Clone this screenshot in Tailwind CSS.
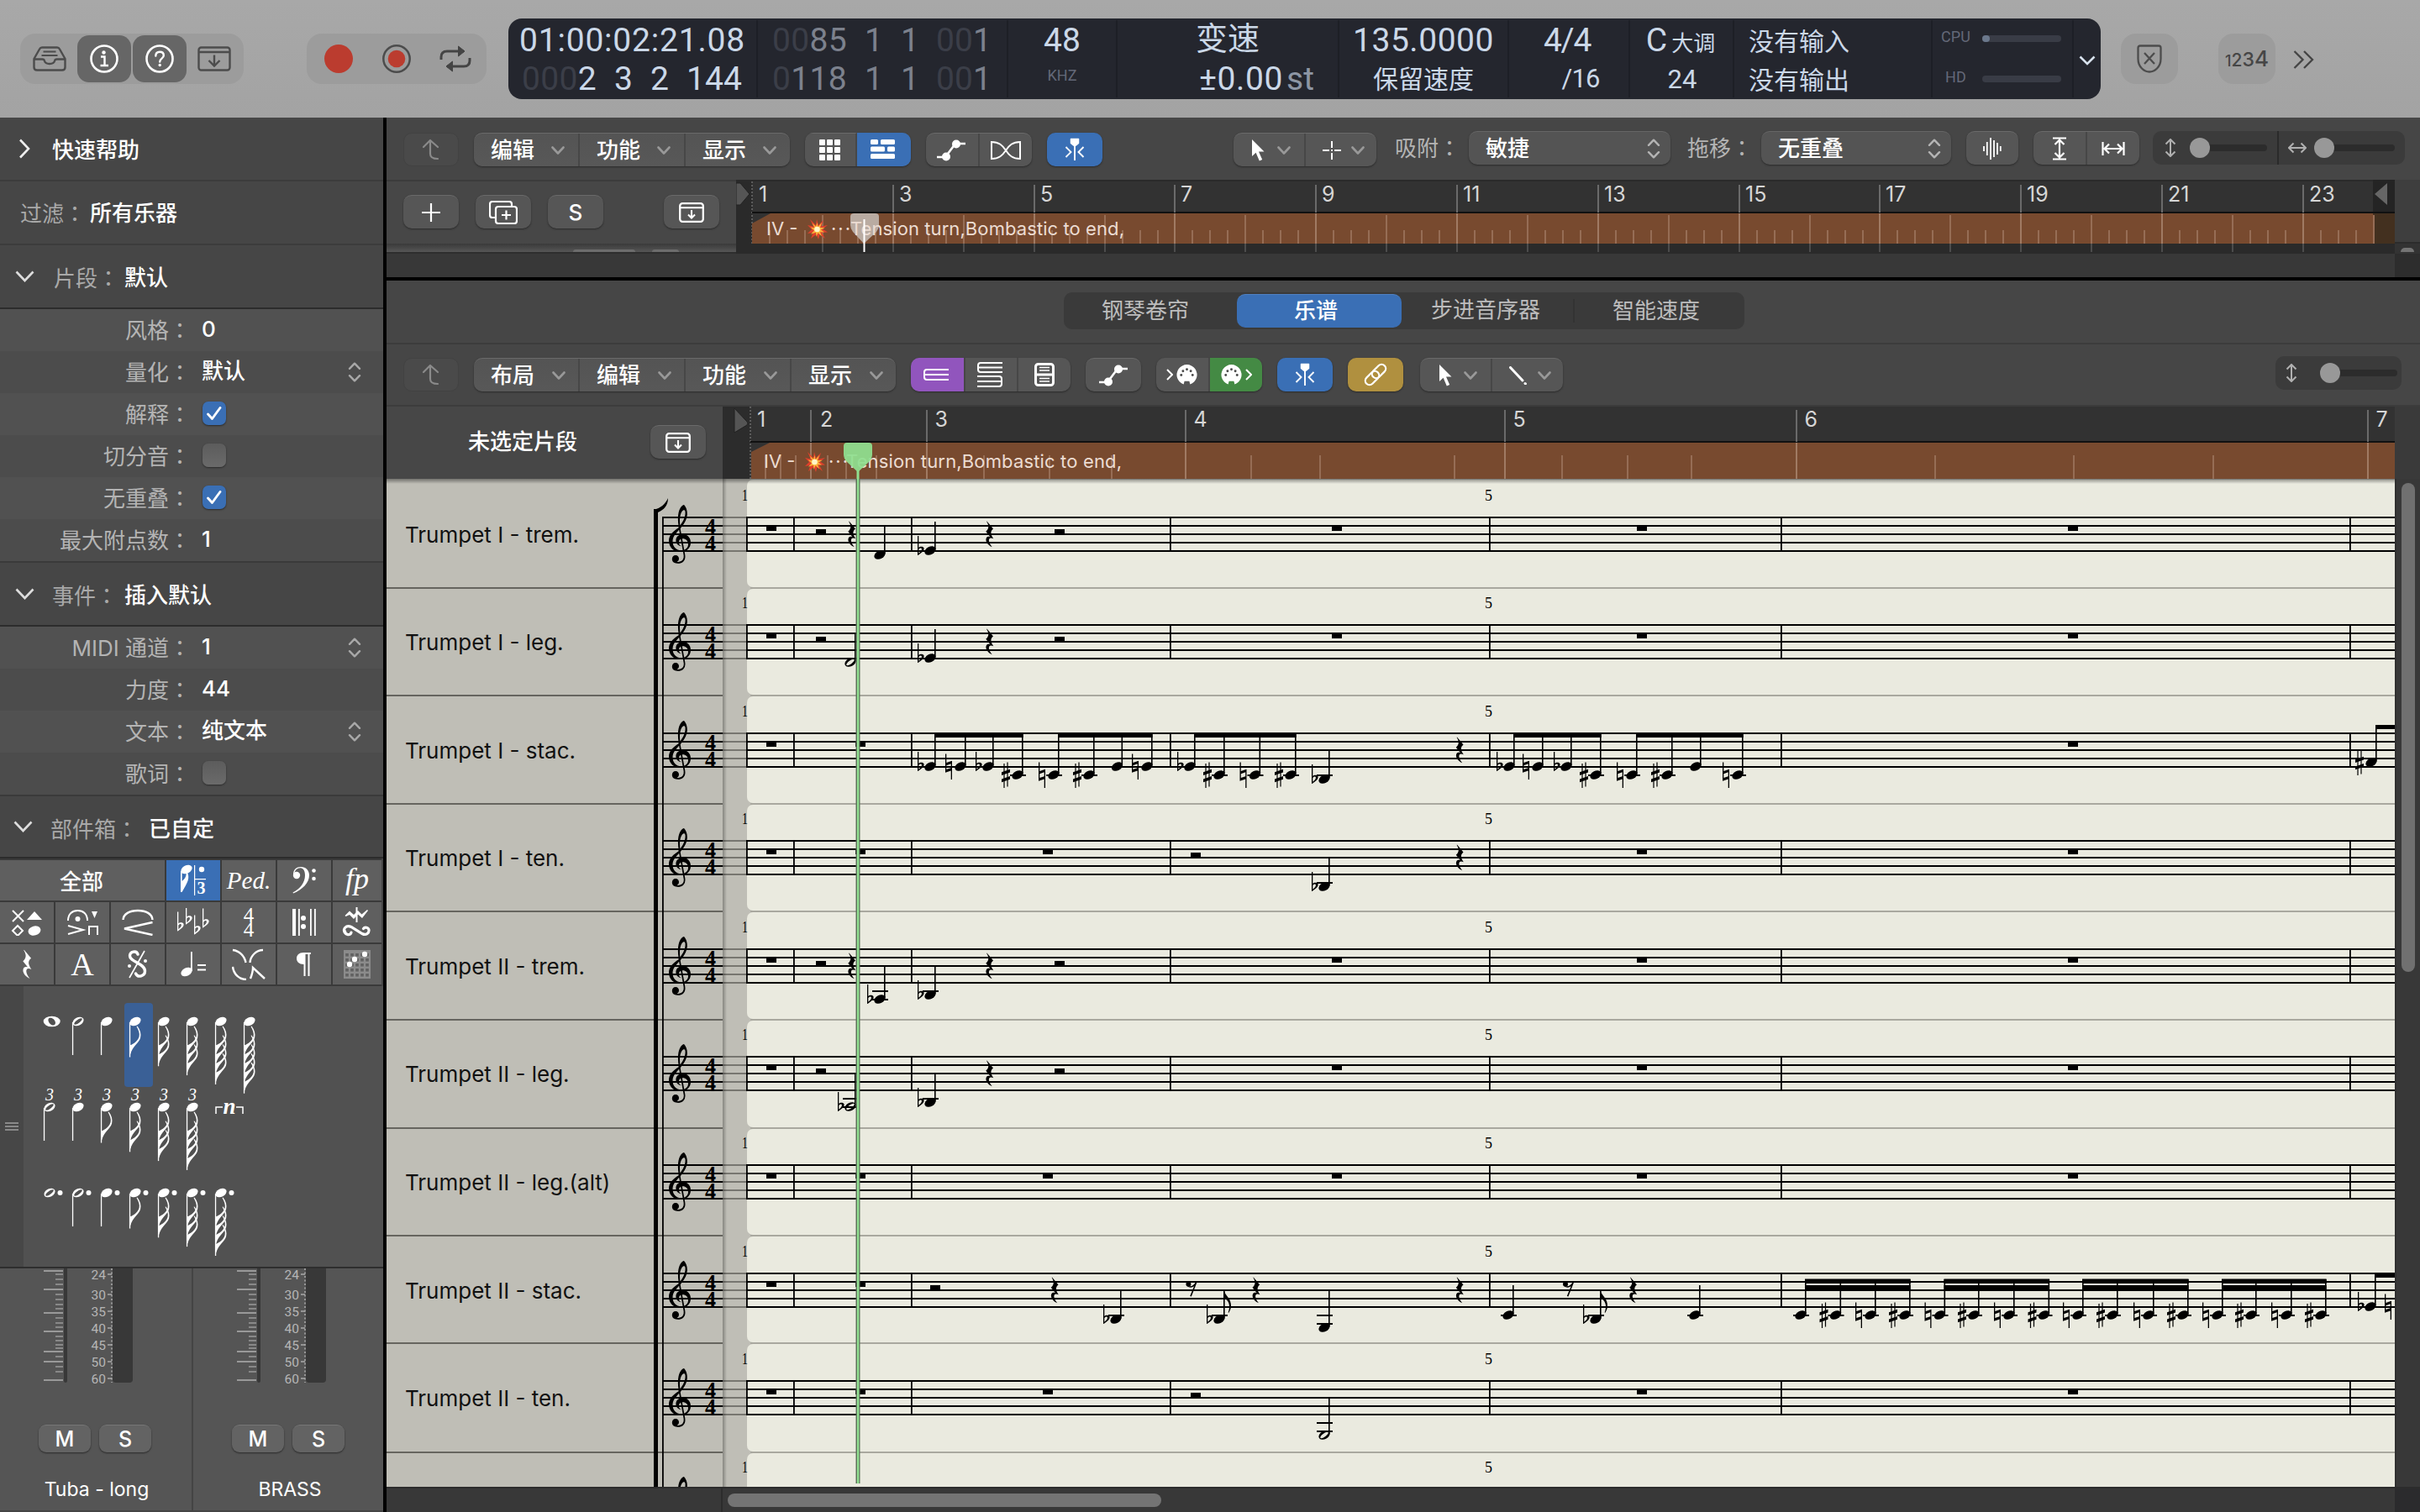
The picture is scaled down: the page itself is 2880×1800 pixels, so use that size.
<!DOCTYPE html>
<html lang="zh-CN">
<head>
<meta charset="utf-8">
<title>Logic Pro</title>
<script src="https://cdn.jsdelivr.net/npm/@tailwindcss/browser@4"></script>
</head>
<body class="w-[2880px] h-[1800px] overflow-hidden bg-black font-[Inter,'Noto_Sans_CJK_SC',sans-serif] text-[26px] leading-none text-white whitespace-nowrap flex flex-col">

<svg width="0" height="0" class="absolute">
  <defs>
    <symbol id="chev" viewBox="0 0 16 10"><path d="M1.500 1.500 8 8.500l6.500-7" fill="none" stroke="currentColor" stroke-width="2.600" stroke-linecap="round" stroke-linejoin="round"/></symbol>
    <symbol id="updown" viewBox="0 0 16 26"><path d="M1.500 8.500 8 1.800l6.500 6.700M1.500 17.500 8 24.200l6.500-6.700" fill="none" stroke="currentColor" stroke-width="2.600" stroke-linecap="round" stroke-linejoin="round"/></symbol>
    <symbol id="up" viewBox="0 0 24 26"><path d="M3 10 11 2l9 8M11 2v16c0 4 2 6 9 6" fill="none" stroke="currentColor" stroke-width="2.200" stroke-linecap="round" stroke-linejoin="round"/></symbol>
    <symbol id="boxdown" viewBox="0 0 30 24"><rect x="1.200" y="1.200" width="27.600" height="21.600" rx="3" fill="none" stroke="currentColor" stroke-width="2.300"/><path d="M1 6.200h28M15 9v9M11 14.400l4 4 4-4" fill="none" stroke="currentColor" stroke-width="2.100"/></symbol>
    <symbol id="curve" viewBox="0 0 36 26"><path d="M1 21h11M24 5h11M11 21 23 5" stroke="currentColor" stroke-width="2.600" fill="none"/><circle cx="12" cy="20.500" r="5" fill="currentColor"/><circle cx="24" cy="5.500" r="5" fill="currentColor"/></symbol>
    <symbol id="catch" viewBox="0 0 26 28"><path d="M8.500 1.500h9v5L14.500 9h-3L8.500 6.500z" fill="currentColor" stroke="currentColor" stroke-width="1.500" stroke-linejoin="round"/><path d="M13 8v19M2.500 11l6 6-6 6M23.500 11l-6 6 6 6" stroke="currentColor" stroke-width="1.900" fill="none"/></symbol>
    <symbol id="arrow" viewBox="0 0 16 26"><path d="M1 0v20l4.600-4.300L9.800 25.600l3.400-1.500L9 14.600h6.500z" fill="currentColor"/></symbol>
    <symbol id="midi" viewBox="0 0 28 28"><path d="M10 25.500A12.500 12.500 0 1 1 18 25.500L17 21.500h-6z" fill="currentColor"/><g fill="#4b4b4b"><circle cx="7" cy="14" r="1.500"/><circle cx="9.200" cy="9" r="1.500"/><circle cx="14" cy="7" r="1.500"/><circle cx="18.800" cy="9" r="1.500"/><circle cx="21" cy="14" r="1.500"/></g></symbol>
    <symbol id="boom" viewBox="0 0 24 24"><path d="M11 0l2 7 6-6-2.500 7.500L24 7l-6 4.500 6 4-7 .2L21 23l-6.500-5-1.500 6-2.500-6L4 23l2.500-7L0 17l5-5L0 7l7 1.500L3 0l7 7z" fill="#e0402c"/><path d="M11.500 4l1 5 4.500-5-2 6 5.500 0-4.500 2.500 4 3-5-.3 2 5-4.500-4-2 4.500-.5-5-6 2 4-4.200L3.500 9.500l5 .8L5.500 4.500l4.500 4z" fill="#fbb53a"/><circle cx="11.500" cy="12" r="3.300" fill="#fff6c8"/></symbol>

    <g id="n-black"><ellipse rx="7" ry="4.700" transform="rotate(-27)"/></g>
    <g id="n-half"><path fill-rule="evenodd" transform="rotate(-27)" d="M-7 0a7 4.700 0 1 0 14 0a7 4.700 0 1 0-14 0zM-5.700.8C-5.200-1.600 4.500-3.600 5.700-.8 5.200 1.600-4.500 3.600-5.700.8z"/></g>
    <g id="n-whole"><path fill-rule="evenodd" d="M-10 0a10 6.300 0 1 0 20 0a10 6.300 0 1 0-20 0zM-3.200-3.900C-.5-5.500 3.500-2.500 4.200.8 4.700 3.500 3 5 .8 4.500-3 3.700-6-2-3.200-3.900z"/></g>
    <g id="a-flat"><path d="M-4-17.500h1.300v14C-1.500-5 3-5.300 3.600-2.800 4.200.5-.5 3.200-3.600 5.500H-4zM-2.700-1.500v4.800C-.2 1.400 1.200-.5.900-2.200.6-3.600-1.700-3.200-2.700-1.500z" fill-rule="evenodd"/></g>
    <g id="a-nat"><path d="M-4-15h1.300v10.500L4-6.800V15.500H2.700V5L-4 7.300zM-2.700-1.200V3.600L2.700 1.800V-3.200z" fill-rule="evenodd"/></g>
    <g id="a-sharp"><path d="M-2-13.500v29M2-15v29" stroke="#000" stroke-width="1.200"/><path d="M-5-3.300 5-6.800v3.800L-5 .5zM-5 4.900 5 1.400v3.800L-5 8.700z"/></g>
    <g id="r-quarter"><path d="M-3-15.500 4.500-6.500C1 -3.500 1 -.5 4.800 5.300 1.200 3.500-.9 4.500-.6 8-.3 10.500 1.500 13 3.200 15.200-1.500 13.200-5.200 8.700-3.800 4.700-3.100 2.800-1 2.300 1 3.200L-4.200-3.300C-.6-6.500-.2-10-3.300-15z"/></g>
    <g id="r-eighth"><circle cx="-3.600" cy="-5.300" r="3"/><path d="M-5-3.600C-1.500-1.500 2.500-3 4.900-7.500L6.300-7-.2 9.500l-1.600-.5L3-2.700C.5-.8-3-.8-5-3z"/></g>
    <g id="flag"><path d="M0 0h.8C1.500 6 9.500 9.500 9 19c-.2 3-1.300 5.500-2.600 7.800l-.8-.4C8 21 8.200 13 .8 9.500H0z"/></g>
    <g id="flag-down"><path d="M0 0v-14C2-14.500 9.300-17.500 11.400-24.500 12.400-28.500 10.500-32.500 8.300-36.500l1-.4C12.800-32 14-27.500 12.900-23 11.200-16.800 4-14 .8-3z"/></g>
    <g id="clef"><path fill-rule="evenodd" d="M12 27C10.300 19 10.500 10 13 5 14.500 1.500 17 0 18 0c2.500 2.500 4.200 7 3.800 12-.6 6.500-4.300 11.500-8 16C9.500 33 4.500 37 4.500 43.500 4.500 50 9 54.200 14.500 54.200 19 54.200 23 51.700 23 47c0-4-3-6.700-6.500-6.700-3 0-4.600 2-4.600 4.600 0 2 1.200 3.500 2.900 4.400C11 48.600 8.400 46 8.400 42.500c0-4.500 3.600-7.400 8.100-7.400C22 35.100 26 39 26 45c0 6.500-5 11-12 11C6 56 0 51 0 42.500 0 36 5.500 31 12 27zM13.400 24.500C12.600 18 13 12 15.500 8c1.500-2.300 3.600-2.500 4 0 .6 6-2.600 12-6.100 16.500z"/><path d="M12.200 25l6.300 35c.8 5.500-2.500 9-8 9" fill="none" stroke="#000" stroke-width="1.700"/><path d="M18 64c-1.500 4-4.500 5.700-8 5.700-4 0-6.200-2.200-6.200-5.200C3.800 62 5.600 60 8 60c2.500 0 4 1.700 4 4 0 2-1 3.300-2.500 4 4 .5 7-1 8.500-4z"/></g>
  </defs>
</svg>

<!-- control bar -->
<header class="relative h-[140px] shrink-0 bg-linear-to-b from-[#a8a8a8] to-[#a3a3a3] flex items-start text-[#4c4c4c]">
  <div class="ml-6 mt-10 w-[266px] h-[60px] rounded-[18px] bg-[#9c9c9c] flex items-center px-[2px]">
    <div class="w-[66px] flex justify-center"><svg width="40" height="30" viewBox="0 0 40 30" fill="none" stroke="currentColor" stroke-width="2.400" stroke-linejoin="round"><path d="M1.500 15 8 3.500Q9 1.500 11 1.500h18q2 0 3 2L38.500 15v10q0 3.500-3.500 3.500H5Q1.500 28.500 1.500 25zM1.500 15.500h10q2 0 2.500 2 1 3.500 6 3.500t6-3.500q.5-2 2.500-2h10"/><path d="M12.500 6.500h15M10.500 11h19" stroke-width="2"/></svg></div>
    <div class="w-16 h-14 rounded-[14px] bg-[#666] text-white flex items-center justify-center"><svg width="36" height="36" viewBox="0 0 36 36"><circle cx="18" cy="18" r="15.500" fill="none" stroke="currentColor" stroke-width="2.600"/><circle cx="17.500" cy="10.500" r="2.200" fill="currentColor"/><path d="M14 15.500h4.500V26M13.500 26h9.500" stroke="currentColor" stroke-width="2.400" fill="none"/></svg></div>
    <div class="ml-[2px] w-16 h-14 rounded-[14px] bg-[#666] text-white flex items-center justify-center"><svg width="36" height="36" viewBox="0 0 36 36"><circle cx="18" cy="18" r="15.500" fill="none" stroke="currentColor" stroke-width="2.600"/><path d="M13.300 14.500c0-3 2-4.800 4.800-4.800s4.700 1.700 4.700 4.200c0 3.800-4.600 3.600-4.600 7.600" stroke="currentColor" stroke-width="2.400" fill="none" stroke-linecap="round"/><circle cx="18.200" cy="25.500" r="1.700" fill="currentColor"/></svg></div>
    <div class="w-[66px] flex justify-center"><svg width="40" height="30" viewBox="0 0 40 30" fill="none" stroke="currentColor" stroke-width="2.400"><rect x="1.500" y="1.500" width="37" height="27" rx="3"/><path d="M1.500 7h37M20 10.500v13M13.500 17l6.500 6.500 6.500-6.500"/></svg></div>
  </div>
  <div class="ml-[75px] mt-10 w-[214px] h-[60px] rounded-[18px] bg-[#9c9c9c] flex items-center pl-[21px]">
    <svg width="34" height="34"><circle cx="17" cy="17" r="17" fill="#bb3c2f"/></svg>
    <svg class="ml-[35px]" width="34" height="34"><circle cx="17" cy="17" r="15.700" fill="none" stroke="#4c4c4c" stroke-width="2.500"/><circle cx="17" cy="17" r="10.300" fill="#bb3c2f"/></svg>
    <svg class="ml-[34px]" width="38" height="32" viewBox="0 0 38 32" fill="none" stroke="#444" stroke-width="3"><path d="M2 17v-3q0-7 7-7h20M36 15v3q0 7-7 7H9"/><path d="M22.500 1 30 7l-7.500 6zM15.500 19 8 25l7.500 6z" fill="#444" stroke-width="1"/></svg>
  </div>

  <div class="ml-[26px] mt-[22px] w-[1895px] h-24 rounded-[16px] bg-[#24262e] text-[#cbd8e8] font-[Roboto,'Noto_Sans_CJK_SC',sans-serif] flex py-[2px] [&>div]:border-r-2 [&>div]:border-[#1d1f26]">
    <div class="w-[297px] pl-[13px] pt-[7px] text-[39px]">
      <div class="h-[46px] leading-[35px]"><span data-w="269">01:00:02:21.08</span></div>
      <div class="pl-[3px] flex gap-[21px] leading-[35px]"><span data-w="89"><span class="text-[#3b3e48]">000</span>2</span><span data-w="22">3</span><span data-w="22">2</span><span data-w="66">144</span></div>
    </div>
    <div class="w-[298px] pl-[17px] pt-[7px] text-[39px] text-[#7c818d]">
      <div class="h-[46px] flex gap-[21px] leading-[35px]"><span data-w="89"><span class="text-[#3b3e48]">00</span>85</span><span data-w="22">1</span><span data-w="21">1</span><span data-w="66"><span class="text-[#3b3e48]">00</span>1</span></div>
      <div class="flex gap-[21px] leading-[35px]"><span data-w="89"><span class="text-[#3b3e48]">0</span>118</span><span data-w="22">1</span><span data-w="21">1</span><span data-w="66"><span class="text-[#3b3e48]">00</span>1</span></div>
    </div>
    <div class="w-[130px] pt-[7px] text-center text-[39px] leading-[35px]">48<div class="mt-[14px] text-[18px] leading-[20px] text-[#636878]"><span data-w="35">KHZ</span></div></div>
    <div class="w-[264px] text-[39px]">
      <div class="pl-[93px] pt-[1px] h-[53px] text-[38px] leading-[42px]">变速</div>
      <div class="pl-[97px] leading-[35px] flex gap-[4px]"><span data-w="100">±0.00</span><span class="text-[#8d96a4]">st</span></div>
    </div>
    <div class="w-[202px] pt-[7px] text-center text-[39px] leading-[35px]"><span data-w="168">135.0000</span><div class="mt-[9px] text-[30px] leading-[40px]">保留速度</div></div>
    <div class="w-[144px] pt-[7px] pr-[4px] text-center text-[39px] leading-[35px]"><span data-w="56">4/4</span><div class="mt-[8px] pl-[32px] text-[31px] leading-[40px]"><span data-w="45">/16</span></div></div>
    <div class="w-[124px] text-center">
      <div class="pt-[7px] h-[50px] flex items-baseline justify-center gap-[5px] pr-[2px] text-[39px] leading-[35px]">C<span class="text-[26px]">大调</span></div>
      <div class="text-[31px] leading-[42px]"><span class="pl-[2px]">24</span></div>
    </div>
    <div class="w-[236px] pl-[17px] pt-[4px] text-[30px] leading-[44px]">没有输入<div class="mt-[2px]">没有输出</div></div>
    <div class="w-[168px] pt-[10px] text-[18px] text-[#636878]">
      <div class="pl-[10px] h-[20px] flex items-center"><span data-w="35">CPU</span><div class="ml-[14px] mt-[4px] w-[94px] h-2 rounded-full bg-[#393c46]"><div class="w-[9px] h-2 rounded-full bg-[#6b788c]"></div></div></div>
      <div class="mt-[28px] pl-[15px] h-[20px] flex items-center"><span data-w="25">HD</span><div class="ml-[19px] mt-[4px] w-[94px] h-2 rounded-full bg-[#393c46]"></div></div>
    </div>
    <span class="w-[32px] flex items-center justify-center"><svg class="mt-1" width="20" height="12" viewBox="0 0 20 12"><path d="M1.500 1.500 10 10l8.500-8.500" fill="none" stroke="#d8e2ee" stroke-width="2.600"/></svg></span>
  </div>
  <div class="ml-6 mt-10 w-[68px] h-[60px] rounded-[18px] bg-[#9c9c9c] flex items-center justify-center"><svg width="30" height="34" viewBox="0 0 30 34" fill="none" stroke="#4c4c4c" stroke-width="2.300"><path d="M1.500 4q0-2.500 2.500-2.500h22q2.500 0 2.500 2.500v13C28.500 27 21 32.500 15 32.500S1.500 27 1.500 17zM9 10l12 13M21 10 9 23"/></svg></div>
  <div class="ml-12 mt-10 w-[68px] h-[60px] rounded-[18px] bg-[#9c9c9c] flex items-baseline justify-center pt-[17px] font-medium text-[#464646]"><span class="text-[18px]">1</span><span class="text-[21px]">2</span><span class="text-[23px]">3</span><span class="text-[26px]">4</span></div>
  <svg class="ml-[21px] mt-[60px]" width="25" height="22" viewBox="0 0 25 22" fill="none" stroke="#444" stroke-width="2.300"><path d="M1.500 1 11.500 11l-10 10M13 1l10 10-10 10"/></svg>
</header>

<main class="flex-1 flex min-h-0">

<!-- inspector -->
<aside class="w-[456px] mr-[4px] shrink-0 bg-[#464646] flex flex-col">
  <div class="h-[76px] border-b-2 border-[#3c3c3c] flex items-center pl-[22px] font-medium"><svg width="14" height="24" viewBox="0 0 14 24"><path d="M2 1.500 12 12 2 22.500" fill="none" stroke="#eee" stroke-width="2.600"/></svg><span class="ml-[26px] mt-1">快速帮助</span></div>
  <div class="h-[76px] border-b-2 border-[#3c3c3c] flex items-center pl-6"><span class="mt-[2px] text-[#a9a9a9]">过滤<span lang="zh-TW" class="font-['Noto_Sans_CJK_TC']">：</span></span><span class="mt-[2px] ml-[5px] font-medium">所有乐器</span></div>
  <div class="h-[76px] border-b-2 border-[#2c2c2c] flex items-center pl-[18px]"><svg width="23" height="14" viewBox="0 0 23 14"><path d="M1.500 1.500 11.500 12l10-10.500" fill="none" stroke="#ddd" stroke-width="2.600"/></svg><span class="mt-1 ml-[23px] text-[#a9a9a9]">片段<span lang="zh-TW" class="font-['Noto_Sans_CJK_TC']">：</span></span><span class="mt-1 ml-[6px] font-medium">默认</span></div>
  <div id="p1" class="h-[302px] border-b-2 border-[#3a3a3a]"></div>
  <div class="h-[76px] border-b-2 border-[#2c2c2c] flex items-center pl-[18px]"><svg width="23" height="14" viewBox="0 0 23 14"><path d="M1.500 1.500 11.500 12l10-10.500" fill="none" stroke="#ddd" stroke-width="2.600"/></svg><span class="mt-1 ml-[21px] text-[#a9a9a9]">事件<span lang="zh-TW" class="font-['Noto_Sans_CJK_TC']">：</span></span><span class="mt-1 ml-[8px] font-medium">插入默认</span></div>
  <div id="p2" class="h-[202px] border-b-2 border-[#3a3a3a]"></div>
  <div class="h-[74px] border-b-2 border-[#2c2c2c] flex items-center pl-[16px]"><svg width="23" height="14" viewBox="0 0 23 14"><path d="M1.500 1.500 11.500 12l10-10.500" fill="none" stroke="#ddd" stroke-width="2.600"/></svg><span class="mt-[6px] ml-[21px] text-[#a9a9a9]">部件箱<span lang="zh-TW" class="font-['Noto_Sans_CJK_TC']">：</span></span><span class="mt-[6px] ml-[13px] font-medium">已自定</span></div>

  <!-- part box selector -->
  <div class="h-[152px] bg-[#3a3a3a] pt-[2px] grid grid-cols-[64px_64px_64px_64px_64px_64px_58px] grid-rows-[48px_48px_48px] gap-[2px] [&>div]:bg-[#5f5f5f] [&>div]:flex [&>div]:items-center [&>div]:justify-center font-['Liberation_Serif'] mr-[2px]">
    <div class="col-span-3 font-['Noto_Sans_CJK_SC'] font-medium pr-[2px]"><span>全部</span></div>
    <div class="bg-[#3a6fb5]!"><svg width="32" height="38" viewBox="0 0 32 38" fill="#fff"><use href="#n-black" x="8" y="6"/><path d="M1 8h1.600v25H1zM2.600 20c4-3 6-7 4.500-12h1C13 16 9 22 2.600 33zM17 1h1.200v36H17zM17 17h14v1.200H17z"/><circle cx="26" cy="6" r="3.200"/><text x="20.500" y="35" font-size="20" font-weight="bold" font-family="Liberation Serif">3</text></svg></div>
    <div><span class="italic text-[29px] font-medium">Ped.</span></div>
    <div><svg width="30" height="34" viewBox="0 0 30 34" fill="#fff"><circle cx="6" cy="11" r="4.200"/><path d="M2 10C2 4 6 1 11 1c6 0 10 4 10 10 0 9-8 17-19 21.500l-.5-1C10 27 16 20 16 11 16 6 14 2.200 10.500 2.200 6.500 2.200 3.500 5 3.200 10z"/><circle cx="26.500" cy="5.500" r="2.300"/><circle cx="26.500" cy="15" r="2.300"/></svg></div>
    <div><span class="italic text-[36px] pb-[4px]">fp</span></div>

    <div><svg width="38" height="32" viewBox="0 0 38 32" fill="none" stroke="#fff" stroke-width="2"><path d="M2 2l13 13M15 2 2 15M8 20l6 6-6 6-6-6z"/><path d="M28 3l9 10H19z" fill="#fff" stroke="none"/><ellipse cx="28" cy="26" rx="7.500" ry="5.500" fill="#fff" stroke="none" transform="rotate(-15 28 26)"/></svg></div>
    <div><svg width="38" height="32" viewBox="0 0 38 32" fill="none" stroke="#fff" stroke-width="2"><path d="M2 14C2 6 7 2 13.500 2S25 6 25 14M2 20l18 5-18 5M27 31V21h10v10"/><circle cx="13.500" cy="12" r="3" fill="#fff" stroke="none"/><path d="M30 3h7l-3.500 8z" fill="#fff" stroke="none"/></svg></div>
    <div><svg width="38" height="32" viewBox="0 0 38 32" fill="none" stroke="#fff" stroke-width="2.400"><path d="M1.500 13C2 6 9 2 19 2s17 4 17.500 11M36.500 16 3 23.500 36.500 31"/></svg></div>
    <div><svg width="40" height="34" viewBox="0 0 40 34" fill="#fff"><use href="#a-flat" x="5" y="22"/><use href="#a-flat" x="15" y="14"/><use href="#a-flat" x="25" y="26"/><use href="#a-flat" x="35" y="18"/></svg></div>
    <div><span class="flex flex-col text-[25px] font-medium leading-[17px]"><span>4</span><span>4</span></span></div>
    <div><svg width="30" height="32" viewBox="0 0 30 32" fill="#fff"><path d="M1 0h4v32H1zM8 0h1.800v32H8zM22 0h1.800v32H22zM27 0h1.800v32H27z"/><circle cx="14" cy="11" r="3"/><circle cx="14" cy="21" r="3"/></svg></div>
    <div><svg width="36" height="36" viewBox="0 0 36 36" fill="#fff"><path d="M3.500 10 9 4.500 14 9l5-5 4.500 4.500L30 3l1 1-7 9-5-4.500L14 14 9 9l-4.500 2z"/><path d="M16.500 0h2v18h-2z"/><path d="M4 31c-4-5 1-10.500 7-7.500l13 8c4.500 2.500 8.500-.5 8-4.500-.5-3-5-4-6.500-1.500M3.500 28.500c0 5 7 5.500 7.500 1.500" fill="none" stroke="#fff" stroke-width="3.200" stroke-linecap="round"/></svg></div>

    <div><svg width="24" height="38" viewBox="-8 -17 16 34" fill="#fff"><use href="#r-quarter"/></svg></div>
    <div><span class="text-[38px]">A</span></div>
    <div><svg width="26" height="34" viewBox="0 0 26 34" fill="none" stroke="#fff"><path d="M13 5C11.500 0 3.500 1.500 3.500 7c0 7 18 9 18 18 0 6-8.500 8.500-11 3" stroke-width="3.400" stroke-linecap="round"/><path d="M21 1 3 33" stroke-width="1.600"/><circle cx="3" cy="19" r="2" fill="#fff" stroke="none"/><circle cx="22" cy="13" r="2" fill="#fff" stroke="none"/></svg></div>
    <div><svg width="32" height="30" viewBox="0 0 32 30" fill="#fff"><use href="#n-black" x="8" y="24"/><path d="M13 0h1.800v23H13zM21 15h10v2H21zM21 20.500h10v2H21z"/></svg></div>
    <div><svg width="40" height="38" viewBox="0 0 40 38" fill="none" stroke="#fff" stroke-width="2.400"><path d="M1 2c8 1 14 7 15.500 15M37 2c-8 0-15 7-15.500 15M1 22c1 9 8 15 16 15M22 36c2-5 3-9 3-13l14 13"/></svg></div>
    <div><svg width="20" height="28" viewBox="0 0 20 28" fill="#fff"><path d="M9 0h9v2h-1.500v26h-2V2H11.500v26h-2V14C4 14 1 11 1 7s3-7 8-7z"/></svg></div>
    <div><svg width="32" height="34" viewBox="0 0 32 34"><path d="M0 0h32v34H0z" fill="#8b8b8b"/><path d="M4 4v28M10 4v28M16 4v28M22 4v28M28 4v28" stroke="#616161" stroke-width="3.600" stroke-dasharray="3.600 2.400" fill="none"/><g fill="#fff"><circle cx="25" cy="5" r="3.200"/><circle cx="13" cy="11" r="3.200"/><circle cx="7" cy="17" r="3.200"/></g></svg></div>
  </div>
  <div class="h-[336px] border-b-2 border-[#2e2e2e] flex">
    <div class="w-7 bg-[#474747] flex items-center justify-center"><svg width="16" height="12"><path d="M0 2h16M0 6h16M0 10h16" stroke="#a0a0a0" stroke-width="1.300"/></svg></div>
    <svg id="parts" class="flex-1 bg-[#515151]" viewBox="28 1174 428 334" fill="#fff"></svg>
  </div>
  <div id="mixer" class="flex-1 bg-[#555] flex border-b-2 border-[#444]"></div>
</aside>

<section class="flex-1 flex flex-col min-w-0">
  <!-- tracks toolbar -->
  <div class="h-[74px] bg-[#464646] flex items-start pl-5 pt-[18px] font-medium">
    <div class="w-[66px] h-10 rounded-[10px] bg-[#4a4a4a] border border-[#424242] text-[#8a8a8a] flex items-center justify-center"><svg width="24" height="26"><use href="#up"/></svg></div>
    <div class="ml-[18px] w-[376px] h-10 rounded-[10px] bg-linear-to-b from-[#545454] to-[#585858] border-t border-[#6a6a6a] shadow-[0_1px_2px_#2a2a2a] flex [&>div]:flex-1 [&>div]:flex [&>div]:items-center [&>div]:justify-between [&>div]:pl-5 [&>div]:pr-[16px]">
      <div>编辑<svg class="text-[#999]" width="16" height="10"><use href="#chev"/></svg></div>
      <div class="border-x-2 border-[#474747]">功能<svg class="text-[#999]" width="16" height="10"><use href="#chev"/></svg></div>
      <div>显示<svg class="text-[#999]" width="16" height="10"><use href="#chev"/></svg></div>
    </div>
    <div class="ml-[18px] w-[126px] h-10 rounded-[10px] bg-[#565656] shadow-[0_1px_2px_#2a2a2a] flex overflow-hidden">
      <div class="w-[62px] flex items-center justify-center border-t border-[#6a6a6a] border-r-2 border-r-[#474747]"><svg width="26" height="26" fill="#fff"><g id="g3"><rect width="7" height="7" rx="1"/><rect x="9" width="7" height="7" rx="1"/><rect x="18" width="7" height="7" rx="1"/></g><use href="#g3" y="9"/><use href="#g3" y="18"/></svg></div>
      <div class="flex-1 bg-[#3a6fb5] flex items-center justify-center pr-[2px]"><svg width="30" height="24" fill="#fff"><rect width="9" height="6" rx="1.500"/><rect x="12" width="17" height="6" rx="1.500"/><rect y="8.500" width="17" height="6" rx="1.500"/><rect x="20" y="8.500" width="9" height="6" rx="1.500"/><rect y="17" width="29" height="6" rx="1.500"/></svg></div>
    </div>
    <div class="ml-[18px] w-[126px] h-10 rounded-[10px] bg-[#565656] border-t border-[#6a6a6a] shadow-[0_1px_2px_#2a2a2a] flex">
      <div class="w-[64px] flex items-center justify-center border-r-2 border-[#474747]"><svg class="mr-[2px]" width="36" height="26"><use href="#curve"/></svg></div>
      <div class="flex-1 flex items-center justify-center"><svg width="36" height="22" viewBox="0 0 36 22" fill="none" stroke="#fff" stroke-width="2"><path d="M1 1v20C10 21 14 17 18 11S26 1 35 1v20C26 21 22 17 18 11S10 1 1 1z"/></svg></div>
    </div>
    <div class="ml-[18px] w-[66px] h-10 rounded-[10px] bg-[#3a6fb5] shadow-[0_1px_2px_#2a2a2a] flex items-center justify-center"><svg width="26" height="28"><use href="#catch"/></svg></div>
    <div class="ml-[156px] w-[170px] h-10 rounded-[10px] bg-[#565656] border-t border-[#6a6a6a] shadow-[0_1px_2px_#2a2a2a] flex">
      <div class="w-[86px] flex items-center pl-[21px] gap-[15px] border-r-2 border-[#474747]"><svg width="16" height="26"><use href="#arrow"/></svg><svg class="text-[#999]" width="16" height="10"><use href="#chev"/></svg></div>
      <div class="flex-1 flex items-center pl-[20px] gap-[12px]"><svg width="22" height="22"><path d="M11 0v8M11 14v8M0 11h8M14 11h8M10 11h2" stroke="#fff" stroke-width="2"/></svg><svg class="text-[#999]" width="16" height="10"><use href="#chev"/></svg></div>
    </div>
    <span class="ml-[22px] mt-[-2px] h-10 leading-[38px] font-normal text-[#b4b4b4]">吸附<span lang="zh-TW" class="font-['Noto_Sans_CJK_TC']">：</span></span>
    <div class="ml-[10px] mt-[-2px] w-[240px] h-10 rounded-[10px] bg-[#545454] border-t border-[#666] shadow-[0_1px_2px_#2a2a2a] flex items-center justify-between pl-5 pr-3 leading-[38px]">敏捷<svg class="text-[#b4b4b4]" width="16" height="24"><use href="#updown"/></svg></div>
    <span class="ml-5 mt-[-2px] leading-[38px] font-normal text-[#b4b4b4]">拖移<span lang="zh-TW" class="font-['Noto_Sans_CJK_TC']">：</span></span>
    <div class="ml-[10px] mt-[-2px] w-[226px] h-10 rounded-[10px] bg-[#545454] border-t border-[#666] shadow-[0_1px_2px_#2a2a2a] flex items-center justify-between pl-5 pr-3 leading-[38px]">无重叠<svg class="text-[#b4b4b4]" width="16" height="24"><use href="#updown"/></svg></div>
    <div class="ml-[18px] mt-[-2px] w-[62px] h-10 rounded-[10px] bg-[#565656] border-t border-[#6a6a6a] shadow-[0_1px_2px_#2a2a2a] flex items-center justify-center"><svg width="22" height="26"><path d="M1 10v6M4.800 5v16M9 0v26M13 3v20M17 6v14M20.800 10v6" stroke="#fff" stroke-width="1.800"/></svg></div>
    <div class="ml-[18px] mt-[-2px] w-[126px] h-10 rounded-[10px] bg-[#565656] border-t border-[#6a6a6a] shadow-[0_1px_2px_#2a2a2a] flex">
      <div class="w-[64px] flex items-center justify-center border-r-2 border-[#474747]"><svg width="16" height="28" fill="none" stroke="#fff" stroke-width="2.200"><path d="M0 1.500h16M0 26.500h16M8 3v22M2.500 9 8 3.500 13.500 9M2.500 19l5.500 5.500 5.500-5.500"/></svg></div>
      <div class="flex-1 flex items-center justify-center"><svg width="28" height="16" fill="none" stroke="#fff" stroke-width="2.200"><path d="M1.500 0v16M26.500 0v16M3 8h22M9 2.500 3.500 8 9 13.500M19 2.500l5.500 5.500-5.500 5.500"/></svg></div>
    </div>
    <div class="ml-4 mt-[-2px] w-[300px] h-10 rounded-[10px] bg-[#3b3b3b] flex items-center">
      <svg class="ml-[14px]" width="14" height="22" fill="none" stroke="#b0b0b0" stroke-width="2"><path d="M7 1v20M1.500 6.500 7 1l5.500 5.500M1.500 15.500 7 21l5.500-5.500"/></svg>
      <div class="ml-4 relative w-[92px] h-6"><div class="absolute top-2 left-4 w-[76px] h-2 rounded-full bg-[#2c2c2c]"></div><div class="relative w-6 h-6 rounded-full bg-[#989898]"></div></div>
      <div class="ml-[12px] w-[2px] h-10 bg-[#2a2a2a]"></div>
      <svg class="ml-[11px]" width="22" height="14" fill="none" stroke="#b0b0b0" stroke-width="2"><path d="M1 7h20M6.500 1.500 1 7l5.500 5.500M15.500 1.500 21 7l-5.500 5.500"/></svg>
      <div class="ml-[9px] relative w-[96px] h-6"><div class="absolute top-2 left-4 w-[80px] h-2 rounded-full bg-[#2c2c2c]"></div><div class="relative w-6 h-6 rounded-full bg-[#989898]"></div></div>
    </div>
  </div>

  <!-- tracks header and ruler -->
  <div class="h-[116px] shrink-0 flex">
    <div class="w-[416px] flex flex-col border-t-2 border-[#3c3c3c]">
      <div class="h-[74px] bg-[#474747] flex items-start pl-5 pt-4">
        <div class="w-[66px] h-10 rounded-[10px] bg-[#565656] border-t border-[#6a6a6a] shadow-[0_1px_2px_#2a2a2a] flex items-center justify-center"><svg width="22" height="22"><path d="M11 0v22M0 11h22" stroke="#fff" stroke-width="2.200"/></svg></div>
        <div class="ml-5 w-[66px] h-10 rounded-[10px] bg-[#565656] border-t border-[#6a6a6a] shadow-[0_1px_2px_#2a2a2a] flex items-center justify-center"><svg width="34" height="28" viewBox="0 0 34 28" fill="none" stroke="#fff" stroke-width="2.200"><path d="M27 6V4q0-3-3-3H4Q1 1 1 4v13q0 3 3 3h3"/><rect x="8" y="7" width="25" height="20" rx="3"/><path d="M20.500 11.500v11M15 17h11"/></svg></div>
        <div class="ml-5 w-[66px] h-10 rounded-[10px] bg-[#565656] border-t border-[#6a6a6a] shadow-[0_1px_2px_#2a2a2a] flex items-center justify-center font-medium">S</div>
        <div class="ml-[72px] w-[66px] h-10 rounded-[10px] bg-[#565656] border-t border-[#6a6a6a] shadow-[0_1px_2px_#2a2a2a] flex items-center justify-center"><svg width="30" height="24"><use href="#boxdown"/></svg></div>
      </div>
      <div class="h-[10px] bg-linear-to-b from-[#3a3a3a] to-[#565656] flex pl-[222px] items-end"><div class="w-[74px] h-[3px] rounded-t bg-[#6c6c6c]"></div><div class="ml-5 w-[32px] h-[3px] rounded-t bg-[#6c6c6c]"></div></div>
      <div class="flex-1 bg-[#383838] border-t-2 border-[#2e2e2e]"></div>
    </div>
    <div class="w-[1974px] flex flex-col"><svg id="ruler1" width="1974" height="88" viewBox="876 214 1974 88" class="bg-[#323232] shrink-0"></svg><div class="flex-1 bg-[#383838]"></div></div>
    <div class="flex-1 flex flex-col bg-[#3e3e3e]"><div class="h-[76px] border-b-2 border-[#2c2c2c]"></div><div class="h-[12px] bg-[#333] flex items-end justify-center pb-[2px]"><div class="w-4 h-[5px] rounded-t-full bg-[#747474]"></div></div><div class="flex-1 bg-[#2d2d2d]"></div></div>
  </div>

  <!-- editor tabs -->
  <div class="mt-[4px] h-[76px] shrink-0 bg-[#464646] border-b-2 border-[#3c3c3c] pt-[14px] pl-[806px]">
    <div class="w-[810px] h-[44px] rounded-[10px] bg-[#3a3a3a] flex items-center text-[#bdbdbd] [&>div]:text-center [&>div]:leading-[38px]">
      <div class="w-[206px] pr-[12px]">钢琴卷帘</div>
      <div class="w-[196px] h-10 rounded-[10px] bg-[#3a6fb5] border-t border-[#4f80c0] text-white font-medium pr-[8px]">乐谱</div>
      <div class="w-[206px] pr-[4px] border-r-2 border-[#333] h-[28px] leading-[26px]!">步进音序器</div>
      <div class="w-[200px] pr-[6px]">智能速度</div>
    </div>
  </div>

  <!-- score toolbar -->
  <div class="h-[74px] shrink-0 bg-[#464646] border-b-2 border-[#3c3c3c] flex items-start pl-5 pt-4 font-medium">
    <div class="w-[66px] h-10 rounded-[10px] bg-[#4a4a4a] border border-[#424242] text-[#8a8a8a] flex items-center justify-center"><svg width="24" height="26"><use href="#up"/></svg></div>
    <div class="ml-[18px] w-[502px] h-10 rounded-[10px] bg-linear-to-b from-[#545454] to-[#585858] border-t border-[#6a6a6a] shadow-[0_1px_2px_#2a2a2a] flex [&>div]:flex-1 [&>div]:flex [&>div]:items-center [&>div]:justify-between [&>div]:pl-5 [&>div]:pr-[15px]">
      <div>布局<svg class="text-[#999]" width="16" height="10"><use href="#chev"/></svg></div>
      <div class="border-x-2 border-[#474747]">编辑<svg class="text-[#999]" width="16" height="10"><use href="#chev"/></svg></div>
      <div class="border-r-2 border-[#474747]">功能<svg class="text-[#999]" width="16" height="10"><use href="#chev"/></svg></div>
      <div>显示<svg class="text-[#999]" width="16" height="10"><use href="#chev"/></svg></div>
    </div>
    <div class="ml-[18px] w-[190px] h-10 rounded-[10px] bg-[#565656] shadow-[0_1px_2px_#2a2a2a] flex overflow-hidden [&>div]:flex [&>div]:items-center [&>div]:justify-center">
      <div class="w-[63px] bg-[#9155bd] pr-[4px]"><svg width="30" height="14" fill="none" stroke="#fff" stroke-width="2"><path d="M30 1H4Q1 1 1 4v6q0 3 3 3h26M1 7h29"/></svg></div>
      <div class="w-[65px] border-x-2 border-[#474747] pr-[4px]"><svg width="30" height="30" fill="none" stroke="#fff" stroke-width="2"><path d="M30 1H4Q1 1 1 4v5q0 3 3 3h26M2 6.500h28M0 17h26q3 0 3 3v6q0 3-3 3H0M0 23h29"/></svg></div>
      <div class="flex-1"><svg width="24" height="28" viewBox="0 0 24 28" fill="none" stroke="#fff"><rect x="1.500" y="1.500" width="21" height="25" rx="3" stroke-width="3"/><path d="M2 14h20" stroke-width="3"/><path d="M6 5.500h12M6 9h12M6 18.500h12M6 22h12" stroke-width="1.600"/></svg></div>
    </div>
    <div class="ml-[18px] w-[66px] h-10 rounded-[10px] bg-[#565656] border-t border-[#6a6a6a] shadow-[0_1px_2px_#2a2a2a] flex items-center justify-center"><svg width="36" height="26"><use href="#curve"/></svg></div>
    <div class="ml-[18px] w-[126px] h-10 rounded-[10px] bg-[#565656] shadow-[0_1px_2px_#2a2a2a] flex overflow-hidden">
      <div class="w-[64px] flex items-center justify-center gap-[3px] border-r-2 border-[#474747]"><svg width="8" height="14"><path d="M1 1l6 6-6 6" fill="none" stroke="#fff" stroke-width="2"/></svg><svg width="27" height="27"><use href="#midi"/></svg></div>
      <div class="flex-1 flex items-center justify-center gap-[3px] bg-[#448a44]"><svg width="27" height="27"><use href="#midi"/></svg><svg width="8" height="14"><path d="M1 1l6 6-6 6" fill="none" stroke="#fff" stroke-width="2"/></svg></div>
    </div>
    <div class="ml-[18px] w-[66px] h-10 rounded-[10px] bg-[#3a6fb5] shadow-[0_1px_2px_#2a2a2a] flex items-center justify-center"><svg width="26" height="28"><use href="#catch"/></svg></div>
    <div class="ml-[18px] w-[66px] h-10 rounded-[10px] bg-[#b0903f] shadow-[0_1px_2px_#2a2a2a] flex items-center justify-center"><svg width="28" height="28" viewBox="0 0 28 28" fill="none" stroke="#fff" stroke-width="2.200"><rect x="-5" y="-9.500" width="10" height="19" rx="5" transform="translate(18 10) rotate(45)"/><rect x="-5" y="-9.500" width="10" height="19" rx="5" transform="translate(10 18) rotate(45)"/></svg></div>
    <div class="ml-5 w-[170px] h-10 rounded-[10px] bg-[#565656] border-t border-[#6a6a6a] shadow-[0_1px_2px_#2a2a2a] flex">
      <div class="w-[86px] flex items-center pl-[22px] gap-[14px] border-r-2 border-[#474747]"><svg width="16" height="26"><use href="#arrow"/></svg><svg class="text-[#999]" width="16" height="10"><use href="#chev"/></svg></div>
      <div class="flex-1 flex items-center pl-[20px] gap-[12px]"><svg width="22" height="22"><path d="M1.500 1.500 16 17M19 20.500l.4.400" stroke="#fff" stroke-width="3" stroke-linecap="round"/></svg><svg class="text-[#999]" width="16" height="10"><use href="#chev"/></svg></div>
    </div>
    <div class="ml-auto mr-[22px] mt-[-2px] w-[150px] h-10 rounded-[10px] bg-[#3b3b3b] flex items-center">
      <svg class="ml-[12px]" width="14" height="22" fill="none" stroke="#b0b0b0" stroke-width="2"><path d="M7 1v20M1.500 6.500 7 1l5.500 5.500M1.500 15.500 7 21l5.500-5.500"/></svg>
      <div class="ml-[27px] relative w-[92px] h-6"><div class="absolute top-2 left-4 w-[76px] h-2 rounded-full bg-[#2c2c2c]"></div><div class="relative w-6 h-6 rounded-full bg-[#989898]"></div></div>
    </div>
  </div>

  <!-- score header and ruler -->
  <div class="h-[86px] shrink-0 flex">
    <div class="w-[400px] bg-[#474747] flex items-start pt-[22px] pl-[97px] font-medium"><span class="leading-[40px] w-[217px]">未选定片段</span>
      <div class="w-[66px] h-10 rounded-[10px] bg-[#565656] border-t border-[#6a6a6a] shadow-[0_1px_2px_#2a2a2a] flex items-center justify-center"><svg width="30" height="24"><use href="#boxdown"/></svg></div>
    </div>
    <svg id="ruler2" width="1990" height="86" viewBox="860 484 1990 86" class="bg-[#323232]"></svg>
    <div class="flex-1 bg-[#3a3a3a]"></div>
  </div>
  <div class="flex h-[1200px] shrink-0">
    <svg id="score" width="2390" height="1200" viewBox="460 570 2390 1200" class="bg-[#bfbeb6]"></svg>
    <div class="flex-1 bg-[#383838] border-l-2 border-[#303030] pl-[6px] pt-[5px]"><div class="w-4 h-[582px] rounded-full bg-[#707070]"></div></div>
  </div>
  <div class="h-[30px] flex bg-[#383838] border-t-2 border-[#2c2c2c]">
    <div class="w-[400px] border-r-2 border-[#2c2c2c]"></div>
    <div class="w-[1990px] pl-[6px] pt-[6px]"><div class="w-[516px] h-4 rounded-full bg-[#747474]"></div></div>
    <div class="flex-1 bg-[#2b2b2d]"></div>
  </div>
</section>
</main>

<script>
const $ = id => document.getElementById(id);
const chk = '<span class="ml-[1px] w-7 h-7 rounded-[7px] bg-[#3a6fb5] shadow-[0_1px_2px_#2a2a2a] flex items-center justify-center"><svg width="20" height="18"><path d="M2.500 10 7.500 15.500 17 2.500" fill="none" stroke="#fff" stroke-width="2.800" stroke-linecap="round" stroke-linejoin="round"/></svg></span>';
const unc = '<span class="ml-[1px] w-7 h-7 rounded-[7px] bg-linear-to-b from-[#5c5c5c] to-[#6a6a6a] shadow-[0_1px_2px_#2a2a2a]"></span>';
const prop = ([l, v, s], i) => `<div class="h-[50px] flex items-center pb-[2px] ${i % 2 ? 'bg-[#4c4c4c]' : 'bg-[#515151]'}"><span class="w-[227px] mt-[2px] text-right text-[#b4b4b4]">${l}<span lang="zh-TW" class="font-['Noto_Sans_CJK_TC']">：</span></span><span class="ml-[13px] w-[174px] font-medium flex">${v}</span>${s ? '<svg class="mt-[2px] text-[#a8a8a8]" width="16" height="24"><use href="#updown"/></svg>' : ''}</div>`;
$('p1').innerHTML = [['风格', '0'], ['量化', '默认', 1], ['解释', chk], ['切分音', unc], ['无重叠', chk], ['最大附点数', '1']].map(prop).join('');
$('p2').innerHTML = [['MIDI 通道', '1', 1], ['力度', '44'], ['文本', '纯文本', 1], ['歌词', unc]].map(prop).join('');

/* note values in the part box: head symbol, stem and flags */
const use = (id, x, y) => `<use href="#${id}" x="${x}" y="${y}"/>`;
let p = '<rect x="148" y="1194" width="34" height="100" rx="4" fill="#3a6096"/>';
const part = (x, y, head, flags, stem = true) => {
  p += use(head, x, y);
  if (stem) {
    const end = y + 42.5 + Math.max(0, flags - 1) * 10.8 - (flags ? 0 : 2.500);
    p += `<path d="M${x - 7.1} ${y + 1}h1.300V${end}h-1.300z"/>`;
    for (let i = 0; i < flags; i++) p += use('flag-down', x - 6.8, end - i * 10.8);
  }
};
p += use('n-whole', 61.7, 1216);
['n-half', 'n-black', 'n-black', 'n-black', 'n-black', 'n-black', 'n-black'].forEach((h, i) => part(93 + 34 * i, 1216, h, Math.max(0, i - 1)));
['n-half', 'n-black', 'n-black', 'n-black', 'n-black', 'n-black'].forEach((h, i) => {
  part(59 + 34 * i, 1318, h, Math.max(0, i - 1));
  p += `<text x="${59 + 34 * i}" y="1310" font-size="20" font-style="italic" text-anchor="middle" font-family="Liberation Serif">3</text>`;
});
p += '<path d="M257 1326v-8h8M281 1318h8v8" fill="none" stroke="#fff" stroke-width="1.500"/><text x="273" y="1326" font-size="27" font-style="italic" font-weight="bold" text-anchor="middle" font-family="Liberation Serif">n</text>';
['n-half', 'n-half', 'n-black', 'n-black', 'n-black', 'n-black', 'n-black'].forEach((h, i) => {
  part(59 + 34 * i, 1420, h, Math.max(0, i - 2), i > 0);
  p += `<circle cx="${71.500 + 34 * i}" cy="1420" r="3"/>`;
});
$('parts').innerHTML = p;

/* channel strips */
const longs = [1513, 1535, 1563, 1585, 1609, 1621, 1643];
const shorts = [1517, 1523, 1529, 1541, 1547, 1553, 1558, 1569, 1575, 1580, 1591, 1596, 1601, 1605, 1615, 1627, 1633];
$('mixer').innerHTML = ['Tuba - long', 'BRASS'].map((n, i) => `<div class="${i ? 'flex-1' : 'w-[230px] border-r-2 border-[#444]'} flex flex-col items-start">
  <svg width="226" height="186" viewBox="0 1510 226 186">
    <path d="${longs.map(y => `M52 ${y}h23`).join('')}" stroke="#999" stroke-width="2"/>
    <path d="${shorts.map(y => `M66 ${y}h9`).join('')}" stroke="#888" stroke-width="2"/>
    <rect x="76" y="1505" width="4" height="141" rx="2" fill="#383838"/>
    <rect x="134" y="1500" width="24" height="146" rx="4" fill="#383838"/>
    <path d="M133 1510v136" stroke="#aaa" stroke-width="1.500" stroke-dasharray="2 2.500"/>
    ${[24, 30, 35, 40, 45, 50, 60].map((v, k) => { const y = k ? 1521 + 20 * k : 1517; return `<text x="126" y="${y + 5.500}" font-size="15.500" fill="#b5b5b5" text-anchor="end" font-family="Roboto">${v}</text><path d="M128 ${y}h5" stroke="#aaa" stroke-width="1.500"/>`; }).join('')}
  </svg>
  <div class="pl-[46px] flex gap-[10px] font-medium text-[25px]"><div class="w-[62px] h-[33px] rounded-[9px] bg-[#636363] border-t border-[#777] shadow-[0_1px_2px_#2a2a2a] flex items-center justify-center">M</div><div class="w-[62px] h-[33px] rounded-[9px] bg-[#636363] border-t border-[#777] shadow-[0_1px_2px_#2a2a2a] flex items-center justify-center">S</div></div>
  <div class="w-[230px] mt-[31px] text-center text-[23px] leading-[26px]">${n}</div></div>`).join('');

/* rulers */
const line = (x, y1, y2, c, w = 2) => `<path d="M${x} ${y1}V${y2}" stroke="${c}" stroke-width="${w}"/>`;
const num = (x, y, t) => `<text x="${x}" y="${y}" font-size="25" fill="#d6d6d6" font-family="Inter">${t}</text>`;
const marker = (x, y, s) => `<text x="${x}" y="${y}" font-size="22" fill="#ecdcd2" font-family="Inter">IV - </text><use href="#boom" x="${x + 49}" y="${y - 19}" width="24" height="24"/><text x="${x + 77}" y="${y}" font-size="22" fill="#ecdcd2" font-family="Inter" textLength="23">···</text><text x="${x + 98 + s}" y="${y}" font-size="22" fill="#ecdcd2" font-family="Inter" textLength="${328 - s}">Tension turn,Bombastic to end,</text>`;
let r = '<rect x="876" y="214" width="19" height="88" fill="#2a2a2a"/><rect x="876" y="214" width="1974" height="2" fill="#2a2a2a"/><path d="M876 218h5l11 13-11 13h-5z" fill="#555" stroke="#222"/><path d="M895 216V290" stroke="#888" stroke-dasharray="2 2"/><rect x="895" y="252" width="1955" height="2" fill="#111"/><path d="M895 290V266l22-12H2824V290z" fill="#784a2f"/><path d="M2824 254h26v36h-26z" fill="#43301f"/><rect x="876" y="290" width="1974" height="12" fill="#2a2a2a"/><rect x="2824" y="214" width="26" height="38" fill="#242424"/><path d="M2841 218v26l-15-13z" fill="#666"/>';
for (let n = 1; n <= 24; n++) {
  const x = Math.round(895 + (n - 1) * 83.9);
  if (n > 1) {
    r += n % 2 ? line(x, 220, 253, '#6a6a6a') + line(x, 254, 290, '#a07a63') : line(x, 256, 290, '#966d55');
    if (x < 2820) r += line(x, 290, 300, '#4c4c4c');
  }
  if (n % 2) r += num(n === 1 ? 903 : x + 7, 240, n);
  for (let b = 1; b < 4; b++) if (x + b * 21 < 2824) r += line(Math.round(x + b * 21), 274, 290, '#966d55');
}
r += '<path d="M1012 258q0-4 4-4h26q4 0 4 4v10q0 4-3 8l-15 14-13-14q-3-4-3-8z" fill="#bdb0a8" opacity=".95"/>' + marker(912, 280, 2) + '<path d="M1028.500 261V300" stroke="#fff" stroke-width="2"/>';
$('ruler1').innerHTML = r;

r = '<rect x="860" y="484" width="33" height="86" fill="#2c2c2c"/><path d="M874 486l15 16q2 2 0 4l-15 9z" fill="#555" stroke="#222"/><path d="M893 484V570" stroke="#888" stroke-dasharray="2 2"/><rect x="893" y="525" width="1957" height="2" fill="#111"/><path d="M894 570V538l22-11H2850V570z" fill="#784a2f"/>';
r += num(901, 508, 1) + num(976, 508, 2);
[[965, ''], [1103, 3], [1411, 4], [1791, 5], [2138, 6], [2818, 7]].forEach(([x, t]) => { r += line(x, 488, 526, '#6a6a6a') + line(x, 527, 570, '#a07a63'); if (t) r += num(x + 9.5, 508, t); });
[911, 929, 947, 985, 1007, 1043, 1171, 1249, 1323, 1489, 1571, 1731, 1859, 1937, 2013, 2303, 2468, 2634].forEach(x => r += line(x, 542, 570, '#966d55'));
r += marker(909, 557, 0);
r += '<path d="M1004 531q0-4 4-4h26q4 0 4 4v10q0 5-4 9l-13 12-13-12q-4-4-4-9z" fill="#90e090" opacity=".93"/><path d="M1021 560V570" stroke="#90e090" stroke-width="3"/>';
$('ruler2').innerHTML = r;

/* score: y values are offsets from the top staff line */
const tops = [616, 744, 873, 1001, 1130, 1258, 1387, 1516, 1644, 1773];
const seps = [570, 700, 828, 957, 1085, 1214, 1343, 1471, 1599, 1729, 1857];
const names = ['I - trem.', 'I - leg.', 'I - stac.', 'I - ten.', 'II - trem.', 'II - leg.', 'II - leg.(alt)', 'II - stac.', 'II - ten.', ''];
let s = '';
seps.slice(0, 10).forEach((y, i) => {
  s += `<rect x="889" y="${y + 1}" width="1980" height="${seps[i + 1] - y - 2}" rx="7" fill="#eaeadf"/>`;
  if (i) s += `<path d="M460 ${y}H860" stroke="#66655f" stroke-width="2"/><path d="M893 ${y}H2850" stroke="#a9a89f" stroke-width="2"/>`;
});
const wr = (x, t) => `<rect x="${x}" y="${t + 10}" width="12" height="6"/>`;
const hr = (x, t) => `<rect x="${x}" y="${t + 14}" width="12" height="6"/>`;
const qr = (x, t) => use('r-quarter', x, t + 20);
/* pitch offset d: 39.5 = E, 44.5 = D, 49.5 = C, 54.5 = B, 59.5 = A, 64.5 = G */
const note = (x, t, d, acc = '', top = d - 34, half = 0) => {
  let o = use(half ? 'n-half' : 'n-black', x, t + d) + `<rect x="${x + 5}" y="${t + top}" width="1.600" height="${d - top - 1}"/>`;
  if (d > 47) o += `<rect x="${x - 9}" y="${t + 49}" width="19" height="2"/>`;
  if (d > 57) o += `<rect x="${x - 9}" y="${t + 59}" width="19" height="2"/>`;
  if (acc) o += use({ b: 'a-flat', n: 'a-nat', s: 'a-sharp' }[acc], x - (acc === 'b' ? 11 : 14), t + d);
  return o;
};
const beam = (x1, x2, t, y = 0, h = 5) => `<rect x="${x1 + 5}" y="${t + y}" width="${x2 - x1 + 1.6}" height="${h}"/>`;
tops.forEach((t, i) => {
  if (i < 9) {
    for (let k = 0; k < 5; k++) {
      s += `<rect x="789" y="${t - 1 + 10 * k}" width="71" height="2"/><rect x="860" y="${t - 1 + 10 * k}" width="29" height="2" fill="#777670"/><rect x="889" y="${t - 1 + 10 * k}" width="1961" height="2"/>`;
    }
    [889, 945, 1085, 1393, 1773, 2120, 2797].forEach(x => s += `<rect x="${x - 1}" y="${t - 1}" width="1.800" height="42"/>`);
    [20, 40].forEach(d => s += `<text x="845.500" y="${t + d}" font-size="28" font-weight="bold" text-anchor="middle" textLength="13" lengthAdjust="spacingAndGlyphs" font-family="Liberation Serif">4</text>`);
    s += `<text x="482" y="${t + 29.5}" font-size="26" font-family="Inter" fill="#111">Trumpet ${names[i]}</text>`;
    s += wr(912, t);
    if (i !== 7) s += wr(2461, t);
    if (i !== 7 && i !== 2) s += wr(1948, t);
  }
  s += use('clef', 796, t - 15);
  s += `<text x="886.500" y="${t - 20}" font-size="18" text-anchor="middle" textLength="7" lengthAdjust="spacingAndGlyphs" font-family="Liberation Serif">1</text><text x="1771.500" y="${t - 20}" font-size="18" text-anchor="middle" font-family="Liberation Serif">5</text>`;
});
const tail = t => qr(1177.5, t) + hr(1255, t) + wr(1585, t);
let t = tops[0];
s += hr(971, t) + qr(1013.5, t) + note(1047, t, 44.5) + note(1107, t, 39.5, 'b', 5) + tail(t);
t = tops[1];
s += hr(971, t) + note(1012, t, 44.5, '', 9, 1) + note(1107, t, 39.5, 'b', 5) + tail(t);
t = tops[2];
s += wr(1018, t);
[[1107, 39.5, 'b'], [1143, 39.5, 'n'], [1176, 39.5, 'b'], [1211, 49.5, 's'], [1254, 49.5, 'n'], [1296, 49.5, 's'], [1329.5, 39.5], [1365, 39.5, 'n'], [1416, 39.5, 'b'], [1451, 49.5, 's'], [1493.5, 49.5, 'n'], [1536, 49.5, 's'],
 [1796, 39.5, 'b'], [1830, 39.5, 'n'], [1864, 39.5, 'b'], [1899, 49.5, 's'], [1942, 49.5, 'n'], [1984, 49.5, 's'], [2018, 39.5], [2068, 49.5, 'n']].forEach(([x, d, a]) => s += note(x, t, d, a, 0));
s += beam(1107, 1211, t) + beam(1254, 1365, t) + beam(1416, 1536, t) + beam(1796, 1899, t) + beam(1942, 2068, t);
s += note(1576, t, 54.5, 'b', 21) + qr(1737, t) + note(2822, t, 34.5, 's', -10) + beam(2822, 2860, t, -10);
t = tops[3];
s += wr(1018, t) + wr(1241, t) + hr(1417, t) + note(1576, t, 54.5, 'b', 21) + qr(1737, t);
t = tops[4];
s += hr(971, t) + qr(1013.5, t) + note(1047, t, 59.5, 'b', 21) + note(1107, t, 54.5, 'b', 21) + tail(t);
t = tops[5];
s += hr(971, t) + note(1012, t, 59.5, 'b', 21, 1) + note(1107, t, 54.5, 'b', 21) + tail(t);
t = tops[6];
s += wr(1018, t) + wr(1241, t) + wr(1585, t);
t = tops[7];
s += wr(1018, t) + hr(1107, t) + qr(1255, t) + note(1328, t, 54.5, 'b', 21) + use('r-eighth', 1418, t + 18) + note(1451, t, 54.5, 'b', 20) + use('flag', 1456, t + 20) + qr(1494.7, t) + note(1576, t, 64.5, '', 21) + qr(1737, t) + note(1795, t, 49.5, '', 14) + use('r-eighth', 1866.6, t + 18) + note(1899, t, 54.5, 'b', 20) + use('flag', 1904, t + 20) + qr(1943.4, t) + note(2017, t, 49.5, '', 14);
const c6 = [2143, 2184.5, 2226, 2267, 2308.5, 2349, 2391, 2432.5, 2473, 2514, 2557, 2598, 2639, 2679, 2721, 2762];
c6.forEach((x, i) => s += note(x, t, 49.5, i ? (i % 2 ? 's' : 'n') : '', 7));
for (let g = 0; g < 16; g += 4) s += beam(c6[g], c6[g + 3], t, 6.5, 5.5) + beam(c6[g], c6[g + 3], t, 14, 6.5);
s += note(2821, t, 39.5, 'b', 0) + beam(2821, 2860, t) + use('a-nat', 2842, t + 39.5);
t = tops[8];
s += wr(1018, t) + wr(1241, t) + hr(1417, t) + note(1576, t, 64.5, '', 21, 1);
s += '<rect x="778" y="606" width="5" height="1200"/><rect x="788" y="615" width="1.800" height="1200"/><path d="M778 607C786 605 792 600 795 593 795 602 790 607 783 610h-5z"/>';
s += '<defs><linearGradient id="sh" x2="0" y2="1"><stop stop-opacity=".4"/><stop offset="1" stop-opacity="0"/></linearGradient><linearGradient id="shx"><stop stop-opacity=".3"/><stop offset="1" stop-opacity="0"/></linearGradient></defs><rect x="460" y="570" width="2390" height="6" fill="url(#sh)"/><rect x="860" y="570" width="5" height="1200" fill="url(#shx)"/>';
s += '<rect x="1018.500" y="562" width="5" height="1204" fill="#5c7359"/><rect x="1020" y="562" width="2.200" height="1204" fill="#93e393"/>';
$('score').innerHTML = s;

/* set tracking so a readout fills its width */
document.fonts.ready.then(() => document.querySelectorAll('[data-w]').forEach(e => {
  e.style.display = 'inline-block';
  const w = e.getBoundingClientRect().width, n = e.textContent.length;
  e.style.letterSpacing = (e.dataset.w - w) / n + 'px';
}));
</script>
</body>
</html>
